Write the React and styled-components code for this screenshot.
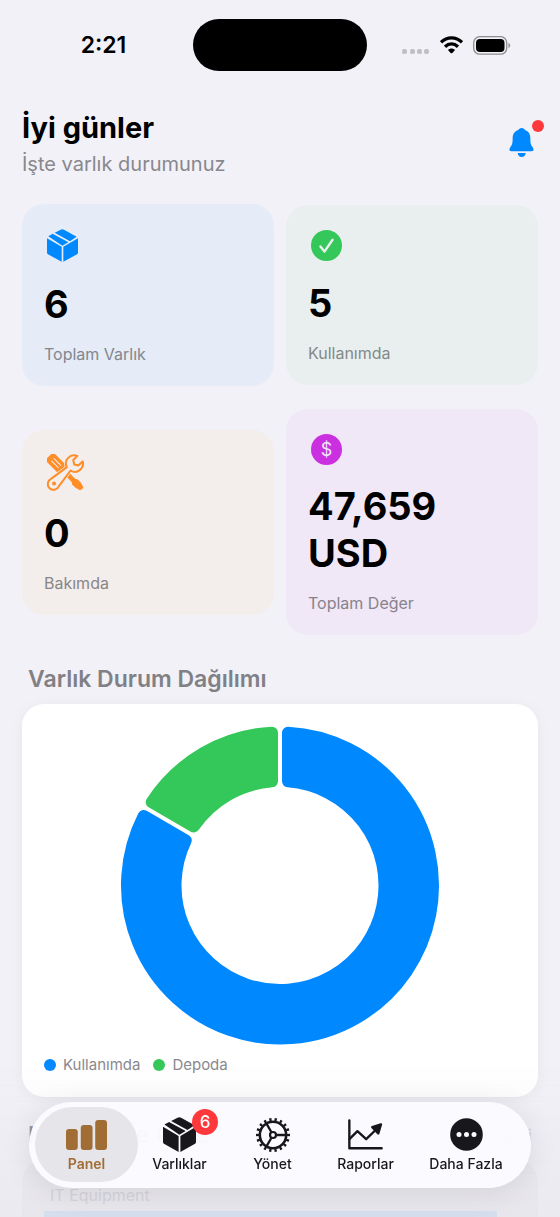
import React from 'react';
import styled, { createGlobalStyle } from 'styled-components';

const GlobalStyle = createGlobalStyle`
    * {
        box-sizing: border-box;
    }
    body {
        margin: 0;
        background: #f2f1f7;
        color: #000;
        font-family: Inter, "Noto Sans", sans-serif;
    }
    h1, h2, p, ul {
        margin: 0;
        padding: 0;
    }
    button {
        border: 0;
        padding: 0;
        background: none;
        color: inherit;
        font: inherit;
        cursor: pointer;
    }
    svg {
        display: block;
        flex: none;
    }
`
const Screen = styled.div`
    height: 100vh;
    overflow: hidden;
`
const StatusBar = styled.div`
    display: grid;
    grid-template-columns: 1fr auto 1fr;
    align-items: center;
    padding: 19px 14px 0;
`
const Clock = styled.span`
    justify-self: center;
    font-size: 23px;
    line-height: 28px;
    font-weight: 600;
`
const Island = styled.div`
    width: 174px;
    height: 52px;
    border-radius: 26px;
    background: #000;
`
const StatusIcons = styled.div`
    display: flex;
    align-items: center;
    justify-self: center;
    gap: 10px;
`
const Content = styled.main`
    padding: 37px 22px 0;
`
const Header = styled.header`
    display: flex;
    justify-content: space-between;
    align-items: center;
    margin-bottom: 24px;
`
const Title = styled.h1`
    font-size: 29px;
    line-height: 40px;
    font-weight: 700;
`
const Subtitle = styled.p`
    font-size: 20px;
    line-height: 32px;
    color: #88888d;
`
const BellButton = styled.button`
    position: relative;
    margin: 0 4px 4px 0;
`
const Dot = styled.span`
    position: absolute;
    top: -8px;
    right: -10px;
    width: 12px;
    height: 12px;
    border-radius: 50%;
    background: #ff383c;
`
const Stats = styled.div`
    display: grid;
    grid-template-columns: 1fr 1fr;
    align-items: center;
    gap: 23px 12px;
`
const StatCard = styled.section`
    padding: 22px;
    border-radius: 22px;
    background: ${p => p.$tint};
`
const StatIcon = styled.div`
    display: flex;
    align-items: center;
    height: ${p => p.$height}px;
    margin: 0 0 16px 3px;
`
const Value = styled.p`
    font-size: 38px;
    line-height: 47px;
    font-weight: 700;
    margin-bottom: 16px;
`
const Label = styled.p`
    font-size: 16px;
    line-height: 20px;
    color: ${p => p.$color};
`
const Coin = styled.span`
    display: flex;
    align-items: center;
    justify-content: center;
    width: 31px;
    height: 31px;
    border-radius: 50%;
    background: #cb30e0;
    color: #f0e7f7;
    font-size: 18px;
`
const SectionHead = styled.div`
    display: flex;
    justify-content: space-between;
    align-items: center;
    padding: ${p => p.$top}px 6px 10px;
`
const SectionTitle = styled.h2`
    font-size: 23px;
    line-height: 30px;
    font-weight: 600;
    color: #808085;
`
const ChartCard = styled.section`
    padding: 22px;
    border-radius: 22px;
    background: #fff;
    box-shadow: 0 2px 14px rgba(0, 0, 0, 0.05);
`
const Legend = styled.ul`
    display: flex;
    gap: 13px;
    margin-top: 10px;
    list-style: none;
`
const LegendItem = styled.li`
    display: flex;
    align-items: center;
    gap: 7px;
    font-size: 15px;
    line-height: 20px;
    color: #88888d;
    &::before {
        content: "";
        width: 12px;
        height: 12px;
        border-radius: 50%;
        background: ${p => p.$color};
    }
`
const CategoryCard = styled.section`
    padding: 25px 22px;
    border-radius: 22px;
    background: #ebeaef;
`
const CategoryName = styled.p`
    padding-left: 6px;
    font-size: 16px;
    line-height: 20px;
    color: #c9c8cd;
`
const CategoryBar = styled.div`
    width: 96%;
    height: 30px;
    margin-top: 6px;
    background: #c5daf2;
`
const Picker = styled.span`
    font-size: 16px;
    color: #c9c8cd;
`
const Fade = styled.div`
    position: fixed;
    left: 0;
    right: 0;
    bottom: 0;
    height: 157px;
    background: linear-gradient(rgba(228, 227, 233, 0), rgba(228, 227, 233, 0.5));
`
const TabBar = styled.nav`
    position: fixed;
    left: 29px;
    right: 29px;
    bottom: 29px;
    display: grid;
    grid-template-columns: repeat(4, 93fr) 108fr;
    height: 86px;
    padding: 5px 11px 6px;
    border-radius: 43px;
    background: rgba(251, 250, 255, 0.97);
    box-shadow: 0 4px 30px rgba(0, 0, 0, 0.09);
`
const Tab = styled.button`
    position: relative;
    display: flex;
    flex-direction: column;
    align-items: center;
    padding-top: 9px;
    color: ${p => (p.$active ? '#a06d35' : '#17171c')};
    font-weight: ${p => (p.$active ? 600 : 500)};
    &::before {
        content: "";
        position: absolute;
        z-index: -1;
        inset: 0 -5px;
        border-radius: 38px;
        background: ${p => (p.$active ? '#e6e5ea' : 'transparent')};
    }
`
const TabIcon = styled.span`
    position: relative;
    display: flex;
    align-items: center;
    height: 37px;
    margin-bottom: 2px;
`
const TabLabel = styled.span`
    font-size: 14px;
    line-height: 18px;
    white-space: nowrap;
`
const Badge = styled.span`
    position: absolute;
    top: -7px;
    right: -22px;
    width: 26px;
    height: 26px;
    border-radius: 50%;
    background: #ff383c;
    color: #fff;
    font-size: 17px;
    line-height: 26px;
    text-align: center;
`

const Cellular = () => (
    <svg width="28" height="17" viewBox="0 0 28 17" fill="#bfbfc4">
        {[0, 8, 15, 22].map(x => <rect key={x} x={x} y="12" width="5" height="5" rx="2" />)}
    </svg>
)
const Wifi = () => (
    <svg width="23" height="18" viewBox="0 0 69 54">
        <g fill="none" stroke="#000" strokeWidth="10">
            <path d="M3 19 C21 1 48 1 66 19" />
            <path d="M15 32 C27 21 42 21 54 32" />
        </g>
        <path d="M24 42 C30 36 39 36 45 42 L37 51 Q34.500 53 32 51Z" />
    </svg>
)
const Battery = () => (
    <svg width="38" height="19" viewBox="0 0 38 19">
        <rect x="0.700" y="0.700" width="33" height="17.500" rx="6" fill="none" stroke="#8d8d91" strokeWidth="1.300" />
        <rect x="3" y="3" width="28.500" height="13" rx="4" />
        <path d="M35.500 6.700 q1.700 1 1.700 2.800 t-1.700 2.800z" fill="#8d8d91" />
    </svg>
)
const Bell = () => (
    <svg width="25" height="29" viewBox="0 0 73 87" fill="#0088ff">
        <path d="M37 0C42 0 46 3 47 6C58 10 63 19 63 30C63 45 64 50 70 58C74 63 74 70 67 70H6C-1 70 -1 63 3 58C9 50 10 45 10 30C10 19 15 10 27 6C28 3 32 0 37 0Z" />
        <path d="M25 75H49C48 83 44 87 37 87S26 83 25 75Z" />
    </svg>
)
const Box = ({ color, width = 31 }) => (
    <svg width={width} height={width + 2} viewBox="0 0 93 98" fill={color}>
        <path d="M41 2Q46 -1 51 2L89 23L69 36L23 11Z" />
        <path d="M4 21L17 14L64 39L46 50Z" />
        <path d="M0 27L44 53V98L4 76Q0 74 0 70Z" />
        <path d="M49 53L93 27V70Q93 74 89 76L49 98Z" />
    </svg>
)
const Check = () => (
    <svg width="31" height="31" viewBox="0 0 92 92">
        <circle cx="46" cy="46" r="46" fill="#34c759" />
        <path d="M28 49L40 64L64 29" fill="none" stroke="#eaf0f0" strokeWidth="7" strokeLinecap="round" strokeLinejoin="round" />
    </svg>
)
const wrench = 'M88 4L76 16L79 29L91 32L104 20A24 24 0 0 1 68 47L33 94A17 17 0 1 1 10 72L57 37A24 24 0 0 1 88 4Z'
const Tools = () => (
    <svg width="37" height="37" viewBox="-2 -2 110 110">
        <g transform="rotate(45)" fill="#ff8d28">
            <rect x="6" y="-17" width="62" height="34" rx="10" />
            <rect x="60" y="-7" width="54" height="14" />
            <path d="M108 -7L114 -11L128 -11L143 -7Q148 0 143 7L128 11L114 11L108 7Z" />
            <path d="M22 -5H50M22 5H50" stroke="#f3edec" strokeWidth="3" strokeLinecap="round" />
        </g>
        <path d={wrench} fill="none" stroke="#f3edec" strokeWidth="10" />
        <path d={wrench} fill="#f3edec" stroke="#ff8d28" strokeWidth="6" strokeLinejoin="round" />
        <circle cx="19" cy="86" r="6" fill="#ff8d28" />
    </svg>
)
const Bars = () => (
    <svg width="41" height="30" viewBox="0 0 122 89" fill="currentColor">
        <rect y="27" width="35" height="62" rx="9" />
        <rect x="44" y="15" width="35" height="74" rx="9" />
        <rect x="87" width="35" height="89" rx="9" />
    </svg>
)
const Gear = () => (
    <svg width="36" height="36" viewBox="-18 -18 36 36" fill="none" stroke="currentColor">
        <circle r="13.200" strokeWidth="2.600" />
        <circle r="15.500" strokeWidth="3" pathLength="90" strokeDasharray="2.100 2.900" strokeDashoffset="1" />
        <circle r="3" strokeWidth="2.200" />
        <path d="M3.500 0H13M-1.700 -3L-6.500 -11.300M-1.700 3L-6.500 11.300" strokeWidth="2.300" />
    </svg>
)
const Trend = () => (
    <svg width="35" height="31" viewBox="0 0 104 92" fill="none" stroke="currentColor" strokeWidth="7" strokeLinecap="round" strokeLinejoin="round">
        <path d="M4 4V87H100" />
        <path d="M5 59L28 36L54 60L86 29" />
        <path d="M98 16L72 24L90 43Z" fill="currentColor" />
    </svg>
)
const More = () => (
    <svg width="33" height="33" viewBox="0 0 33 33">
        <circle cx="16.500" cy="16.500" r="16.300" fill="currentColor" />
        {[9, 16.5, 24].map(x => <circle key={x} cx={x} cy="16.500" r="2.500" fill="#fbfaff" />)}
    </svg>
)

// ring slice with a gap on both sides; the round stroke makes the corners soft
function slice(from, to) {
    const outer = 153, inner = 104.5, gap = 8;
    const point = (r, a) => `${r * Math.sin(a)} ${-r * Math.cos(a)}`;
    const a = from * Math.PI / 180, b = to * Math.PI / 180;
    const o = Math.asin(gap / outer), i = Math.asin(gap / inner);
    const large = to - from > 180 ? 1 : 0;
    return `M${point(outer, a + o)}A${outer} ${outer} 0 ${large} 1 ${point(outer, b - o)}`
        + `L${point(inner, b - i)}A${inner} ${inner} 0 ${large} 0 ${point(inner, a + i)}Z`;
}
const Donut = () => (
    <svg width="100%" height="319" viewBox="-160 -159.500 320 319" role="img" aria-label="Varlık Durum Dağılımı">
        <g strokeWidth="12" strokeLinejoin="round">
            <path d={slice(0, 300)} fill="#0088ff" stroke="#0088ff" />
            <path d={slice(300, 360)} fill="#34c759" stroke="#34c759" />
        </g>
    </svg>
)

const stats = [
    { label: 'Toplam Varlık', value: '6', tint: '#e5ecf7', color: '#82868e', height: 39, icon: <Box color="#0088ff" /> },
    { label: 'Kullanımda', value: '5', tint: '#e9efef', color: '#838988', height: 37, icon: <Check /> },
    { label: 'Bakımda', value: '0', tint: '#f3edec', color: '#8a8686', height: 42, icon: <Tools /> },
    { label: 'Toplam Değer', value: '47,659 USD', tint: '#f0e7f7', color: '#88828d', height: 36, icon: <Coin>$</Coin> },
]
const tabs = [
    { label: 'Panel', icon: <Bars />, active: true },
    { label: 'Varlıklar', icon: <Box color="currentColor" width={33} />, badge: 6 },
    { label: 'Yönet', icon: <Gear /> },
    { label: 'Raporlar', icon: <Trend /> },
    { label: 'Daha Fazla', icon: <More /> },
]

export default function App() {
    return (
        <Screen>
            <GlobalStyle />
            <StatusBar>
                <Clock>2:21</Clock>
                <Island />
                <StatusIcons>
                    <Cellular />
                    <Wifi />
                    <Battery />
                </StatusIcons>
            </StatusBar>
            <Content>
                <Header>
                    <div>
                        <Title>İyi günler</Title>
                        <Subtitle>İşte varlık durumunuz</Subtitle>
                    </div>
                    <BellButton aria-label="Bildirimler">
                        <Bell />
                        <Dot />
                    </BellButton>
                </Header>
                <Stats>
                    {stats.map(s => (
                        <StatCard key={s.label} $tint={s.tint}>
                            <StatIcon $height={s.height}>{s.icon}</StatIcon>
                            <Value>{s.value}</Value>
                            <Label $color={s.color}>{s.label}</Label>
                        </StatCard>
                    ))}
                </Stats>
                <SectionHead $top={29}>
                    <SectionTitle>Varlık Durum Dağılımı</SectionTitle>
                </SectionHead>
                <ChartCard>
                    <Donut />
                    <Legend>
                        <LegendItem $color="#0088ff">Kullanımda</LegendItem>
                        <LegendItem $color="#34c759">Depoda</LegendItem>
                    </Legend>
                </ChartCard>
                <SectionHead $top={23}>
                    <SectionTitle>Kategoriye Göre</SectionTitle>
                    <Picker>Kategori</Picker>
                </SectionHead>
                <CategoryCard>
                    <CategoryName>IT Equipment</CategoryName>
                    <CategoryBar />
                </CategoryCard>
            </Content>
            <Fade />
            <TabBar>
                {tabs.map(t => (
                    <Tab key={t.label} $active={t.active}>
                        <TabIcon>
                            {t.icon}
                            {t.badge && <Badge>{t.badge}</Badge>}
                        </TabIcon>
                        <TabLabel>{t.label}</TabLabel>
                    </Tab>
                ))}
            </TabBar>
        </Screen>
    )
}
